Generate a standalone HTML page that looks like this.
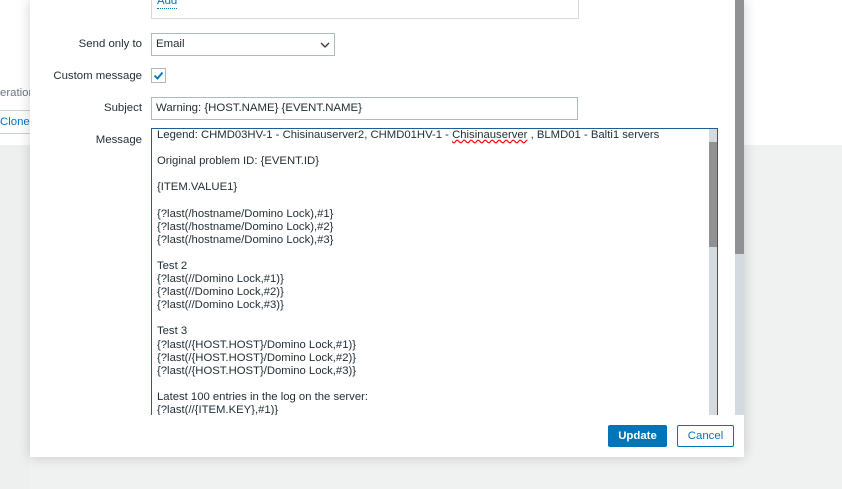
<!DOCTYPE html><html><head><style>
body{margin:0;width:842px;height:489px;overflow:hidden;background:#f0f1f1;font-family:"Liberation Sans",Arial,sans-serif;font-size:11.4px;color:#1f2c33;position:relative}
.a{position:absolute}
.lbl{position:absolute;right:700px;text-align:right;color:#1f2c33}
.ta{position:absolute;left:151px;top:128px;width:565px;height:300px;border:1px solid #1f5d96;border-bottom:none;background:#fff;overflow:hidden}
.ta pre{margin:0;position:absolute;left:5px;top:0px;font:11.3px/13.1px "Liberation Sans",Arial,sans-serif;color:#1f2c33}
</style></head><body>
<div class="a" style="left:0;top:0;width:842px;height:145px;background:#fff"></div>
<div class="a" style="left:0;top:145px;width:30px;height:344px;background:#eef0f0"></div>
<div class="a" style="left:0;top:87px;color:#687780">eration</div>
<div class="a" style="left:0;top:110px;width:30px;height:1px;background:#c9d2d6"></div>
<div class="a" style="left:0;top:116px;color:#0275b8">Clone</div>
<div class="a" style="left:0;top:133px;width:30px;height:1px;background:#c9d2d6"></div>
<div class="a" style="left:30px;top:0;width:714px;height:457px;background:#fff;box-shadow:0 0 12px rgba(0,0,0,.18)"></div>
<div class="a" style="left:735px;top:0;width:9px;height:254px;background:#8f9193"></div>
<div class="a" style="left:735px;top:254px;width:9px;height:161px;background:#d3dbe0"></div>
<div class="a" style="left:151px;top:-1px;width:426px;height:19px;border:1px solid #d5dadc;border-top:none"></div>
<div class="a" style="left:157px;top:-5px;color:#0275b8;border-bottom:1px dotted #0275b8;line-height:13px">Add</div>
<div class="lbl" style="top:38px">Send only to</div>
<div class="a" style="left:151px;top:33px;width:182px;height:21px;border:1px solid #acbbc2;background:#fff"><span style="position:absolute;left:4px;top:4px">Email</span><svg class="a" style="left:168px;top:8px" width="10" height="6"><path d="M1 1l4 4 4-4" stroke="#333" fill="none" stroke-width="1.3"/></svg></div>
<div class="lbl" style="top:70px">Custom message</div>
<div class="a" style="left:151px;top:68px;width:13px;height:13px;border:1px solid #acbbc2;background:#fff"><svg width="13" height="13"><path d="M2.5 6.5l3 3 5-6" stroke="#0275b8" stroke-width="1.8" fill="none"/></svg></div>
<div class="lbl" style="top:102px">Subject</div>
<div class="a" style="left:151px;top:97px;width:425px;height:21px;border:1px solid #acbbc2;background:#fff"><span style="position:absolute;left:4px;top:4px">Warning: {HOST.NAME} {EVENT.NAME}</span></div>
<div class="lbl" style="top:134px">Message</div>
<div class="ta"><pre>Legend: CHMD03HV-1 - Chisinauserver2, CHMD01HV-1 - <span style="text-decoration:underline wavy red">Chisinauserver</span> , BLMD01 - Balti1 servers

Original problem ID: {EVENT.ID}

{ITEM.VALUE1}

{?last(/hostname/Domino Lock),#1}
{?last(/hostname/Domino Lock),#2}
{?last(/hostname/Domino Lock),#3}

Test 2
{?last(//Domino Lock,#1)}
{?last(//Domino Lock,#2)}
{?last(//Domino Lock,#3)}

Test 3
{?last(/{HOST.HOST}/Domino Lock,#1)}
{?last(/{HOST.HOST}/Domino Lock,#2)}
{?last(/{HOST.HOST}/Domino Lock,#3)}

Latest 100 entries in the log on the server:
{?last(//{ITEM.KEY},#1)}</pre>
<div class="a" style="left:557px;top:0;width:8px;height:300px;background:#d3dbe0"></div>
<div class="a" style="left:557px;top:13px;width:8px;height:105px;background:#8f9193"></div>
</div>
<div class="a" style="left:30px;top:415px;width:714px;height:42px;background:#fff"></div>
<div class="a" style="left:608px;top:425px;width:59px;height:22px;background:#0275b8;color:#fff;border-radius:2px;text-align:center;line-height:22px;font-weight:bold">Update</div>
<div class="a" style="left:677px;top:425px;width:55px;height:20px;border:1px solid #0275b8;color:#0275b8;border-radius:2px;text-align:center;line-height:20px;background:#fff">Cancel</div>
</body></html>
